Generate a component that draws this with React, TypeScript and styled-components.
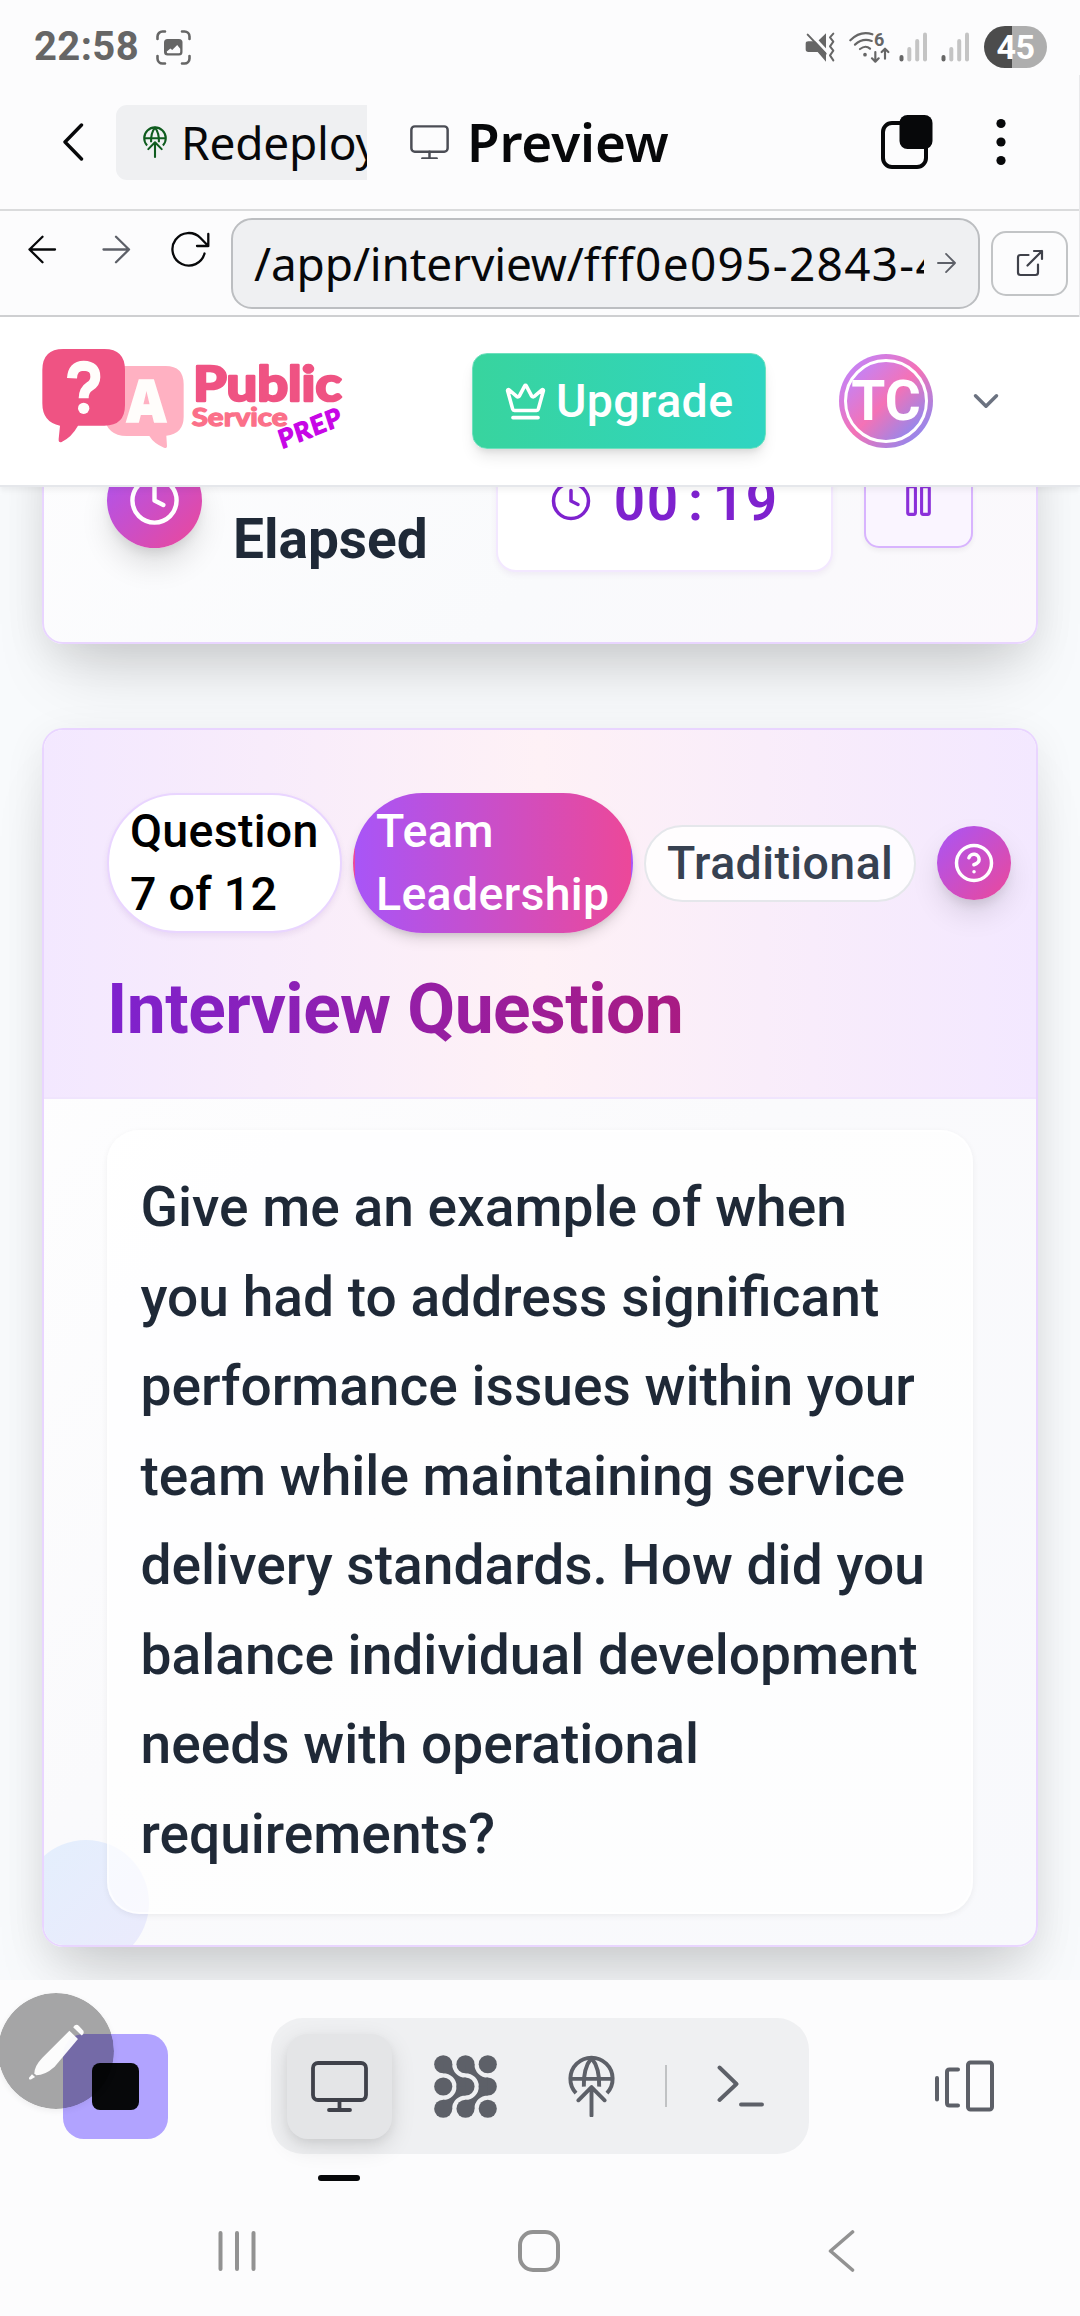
import React from "react";
import styled, { createGlobalStyle, css } from "styled-components";
import { ChevronDown, CircleHelp, Clock, Crown, Pause } from "lucide-react";

const Global = createGlobalStyle`
  * { box-sizing: border-box; }
  body { margin: 0; background: #fcfcfd; }
`;

const shellFont = `"Noto Sans", "Open Sans", sans-serif`;
const appFont = `Roboto, "Liberation Sans", sans-serif`;

const Phone = styled.div`
  position: relative;
  display: flex;
  flex-direction: column;
  width: 1080px;
  height: 2316px;
  overflow: hidden;
  background: #fcfcfd;
  font-family: ${appFont};
`;

/* ---------- system status bar ---------- */

const StatusBar = styled.div`
  display: flex;
  align-items: center;
  flex: none;
  height: 75px;
  padding: 19px 33px 0 34px;
  color: #666;
`;

const Time = styled.span`
  width: 122px;
  font-size: 40px;
  font-weight: 700;
  line-height: 44px;
  letter-spacing: 0.4px;
`;

const StatusIcons = styled.div`
  display: flex;
  align-items: center;
  margin-left: auto;
`;

const Battery = styled.span`
  display: flex;
  align-items: center;
  justify-content: center;
  width: 63px;
  height: 42px;
  margin-left: 15px;
  border-radius: 21px;
  background: linear-gradient(90deg, #4c4c4c 45%, #aeaeae 45%);
  color: #fff;
  font-size: 34px;
  font-weight: 700;
  line-height: 1;
  letter-spacing: -0.5px;
`;

const CaptureIcon = () => (
  <svg width="35" height="35" viewBox="0 0 35 35" fill="none" stroke="#666" strokeWidth="2.6" strokeLinecap="round">
    <path d="M1.5 9V6.5a5 5 0 0 1 5-5H9M26 1.5h2.500a5 5 0 0 1 5 5V9M33.500 26v2.500a5 5 0 0 1-5 5H26M9 33.500H6.500a5 5 0 0 1-5-5V26" />
    <rect x="8" y="9" width="18.500" height="16.500" rx="3.500" fill="#666" stroke="none" />
    <path d="M10.800 21.500l3.600-3 1.800 1.600 5-5 3 3.600V22q0 1.300-1.300 1.300H12q-1.200 0-1.200-1.300z" fill="#fcfcfd" stroke="none" />
  </svg>
);

const MuteIcon = () => (
  <svg width="30" height="31" viewBox="44 51 90 93">
    <path d="M62 79L82 79L107 55V140L82 111H54Q46 111 46 103V86Q46 79 54 79Z" fill="#666" />
    <path d="M60 56L112 112" stroke="#fcfcfd" strokeWidth="9" />
    <path d="M52 59L106 116" stroke="#666" strokeWidth="6" strokeLinecap="round" />
    <path d="M129 56l-10 11 10 13-10 14 10 13-10 14 10 15" fill="none" stroke="#666" strokeWidth="6" strokeLinecap="round" strokeLinejoin="round" />
  </svg>
);

const WifiSix = styled.span`
  position: relative;
  display: block;
  width: 41px;
  height: 32px;
  margin-left: 14px;
`;

const WifiDigit = styled.span`
  position: absolute;
  left: 25px;
  top: 0;
  font-size: 18px;
  font-weight: 700;
  line-height: 18px;
`;

const WifiIcon = () => (
  <WifiSix>
    <svg width="41" height="32" viewBox="177 50 123 96" fill="none" stroke="#666" strokeWidth="6.500" strokeLinecap="round" strokeLinejoin="round">
      <path d="M181 78Q211 48 247 60M195 91Q218 70 245 80M210 104Q227 91 240 103" />
      <circle cx="225" cy="121" r="5.500" fill="#666" stroke="none" />
      <path d="M256 113V141M246 132L256 142L266 132M285 133V104M275 113L285 103L295 113" />
    </svg>
    <WifiDigit>6</WifiDigit>
  </WifiSix>
);

const SignalSvg = styled.svg<{ $gap: number }>`
  margin-left: ${(p) => p.$gap}px;
`;

const SignalIcon = ({ gap }: { gap: number }) => (
  <SignalSvg $gap={gap} width="28" height="30" viewBox="0 0 28 30">
    <rect x="0.500" y="23" width="4" height="6.500" rx="2" fill="#666" />
    <rect x="8.300" y="15" width="4" height="14.500" rx="2" fill="#c4c4c4" />
    <rect x="16.200" y="7" width="4" height="22.500" rx="2" fill="#c4c4c4" />
    <rect x="24" y="0.500" width="4" height="29" rx="2" fill="#c4c4c4" />
  </SignalSvg>
);

/* ---------- browser shell ---------- */

const Shell = styled.div`
  flex: none;
  border-right: 1px solid #e9e9eb;
`;

const TitleBar = styled.div`
  display: flex;
  align-items: center;
  height: 136px;
  padding-left: 62px;
  border-bottom: 2px solid #dadbdc;
`;

const BackChevron = styled.svg`
  flex: none;
  margin-right: 32px;
`;

const RedeployChip = styled.div`
  display: flex;
  align-items: center;
  flex: none;
  width: 251px;
  height: 75px;
  padding-left: 27px;
  border-radius: 11px 0 0 11px;
  background: #eff0f2;
  overflow: hidden;
  font-family: ${shellFont};
  font-size: 46px;
  line-height: 75px;
  letter-spacing: -0.2px;
  color: #07080a;
  white-space: nowrap;

  svg { flex: none; margin-right: 14px; }
`;

const PreviewTitle = styled.h1`
  display: flex;
  align-items: center;
  gap: 18px;
  margin: 0 0 0 43px;
  font-family: ${shellFont};
  font-size: 53px;
  font-weight: 600;
  line-height: 70px;
  letter-spacing: -0.1px;
  color: #07080a;
`;

const TitleActions = styled.div`
  display: flex;
  align-items: center;
  gap: 63px;
  margin-left: auto;
  padding-right: 73px;
`;

const AddressBar = styled.div`
  display: flex;
  align-items: center;
  height: 106px;
  padding: 0 10px 0 27px;
  border-bottom: 2px solid #cfd0d2;
`;

const NavButtons = styled.div`
  display: flex;
  align-items: center;
  width: 204px;
  margin-bottom: 28px;
  gap: 40px;
`;

const AddressField = styled.div`
  display: flex;
  align-items: center;
  width: 749px;
  height: 91px;
  padding: 0 22px 0 21px;
  border: 2px solid #bcbec1;
  border-radius: 21px;
  background: #eff0f2;
`;

const Url = styled.span`
  flex: none;
  width: 670px;
  margin-right: 13px;
  overflow: hidden;
  font-family: ${shellFont};
  font-size: 46px;
  line-height: 64px;
  letter-spacing: -0.15px;
  color: #07080a;
  white-space: nowrap;
`;

const UrlId = styled.span`
  letter-spacing: 1.3px;
`;

const OpenButton = styled.div`
  display: flex;
  align-items: center;
  justify-content: center;
  width: 77px;
  height: 65px;
  margin-left: 11px;
  border: 2px solid #c2c4c6;
  border-radius: 15px;
`;

const GlobeUpIcon = ({ width, color, stroke = 11.5 }: { width: number; color: string; stroke?: number }) => (
  <svg width={width} height={(width * 184) / 138} viewBox="80.500 803 138 184" fill="none" stroke={color} strokeWidth={stroke} strokeLinecap="round" strokeLinejoin="round">
    <path d="M104 915A62 62 0 1 1 195 915" strokeLinecap="butt" />
    <path d="M88 873H211" strokeLinecap="butt" />
    <path d="M127 896Q125 842 149.500 812Q174 842 172 896" strokeLinecap="butt" />
    <path d="M149.500 900V981M111 936L149.500 897L188 936" />
  </svg>
);

const MonitorIcon = ({ width, color, stroke }: { width: number; color: string; stroke: number }) => (
  <svg width={width} height={(width * 51) / 57} viewBox="0 0 57 51" fill="none" stroke={color} strokeWidth={stroke} strokeLinecap="round">
    <rect x="2" y="2" width="53" height="37" rx="5" />
    <path d="M28.500 39V49M18 49H39" />
  </svg>
);

/* ---------- application header ---------- */

const AppHeader = styled.header`
  position: relative;
  z-index: 2;
  display: flex;
  align-items: center;
  flex: none;
  height: 170px;
  padding: 0 82px 0 35px;
  border-bottom: 2px solid #e5e7eb;
  background: #fff;
  box-shadow: 0 3px 6px rgba(0, 0, 0, 0.06);
`;

const LogoMark = styled.svg`
  flex: none;
  margin-bottom: 7px;
`;

const Upgrade = styled.button`
  display: flex;
  align-items: center;
  gap: 9px;
  width: 294px;
  height: 96px;
  margin-left: 117px;
  padding: 0 0 0 31px;
  border: 1px solid #6ee0bd;
  border-radius: 15px;
  background: linear-gradient(90deg, #38d49e, #2fd5c2);
  box-shadow: 0 10px 15px -3px rgba(0, 0, 0, 0.1), 0 4px 6px -2px rgba(0, 0, 0, 0.08);
  color: #fff;
  font-family: ${appFont};
  font-size: 46.500px;
  font-weight: 500;
  line-height: 1;
  letter-spacing: 0.4px;
`;

const avatarGradient = "linear-gradient(135deg, #c084fc 8%, #f472b6 50%, #818cf8 95%)";

const Avatar = styled.div`
  width: 94px;
  height: 94px;
  margin-left: 73px;
  padding: 5px;
  border-radius: 50%;
  background: ${avatarGradient};
`;

const AvatarInner = styled.div`
  display: flex;
  align-items: center;
  justify-content: center;
  height: 84px;
  border: 3px solid #fff;
  border-radius: 50%;
  background: ${avatarGradient};
  color: #fff;
  font-size: 55px;
  font-weight: 700;
  line-height: 1;
`;

const Caret = styled(ChevronDown)`
  margin-left: auto;
  margin-right: -9px;
`;

const Logo = () => (
  <LogoMark width="320" height="125" viewBox="0 0 960 375" fontFamily={`Lato, "Open Sans", sans-serif`}>
    <path d="M262 93H392Q446 93 446 148V245Q446 296 394 302L396 334Q396 342 387 338Q357 326 343 303H275Q215 303 205 240V150Q205 93 262 93Z" fill="#ffb1c2" />
    <path d="M85 42H208Q270 42 270 105V210Q270 272 208 272H129Q110 306 80 321Q70 324 71 312L75 272Q22 262 22 205V105Q22 42 85 42Z" fill="#ef5383" />
    <g fill="none" stroke="#fffdfb" strokeWidth="30" strokeLinejoin="round">
      <path d="M111 130Q113 92 146 92Q182 93 181 126Q181 145 163 155Q146 166 146 190" />
    </g>
    <circle cx="146" cy="220" r="17" fill="#fffdfb" />
    <text x="275" y="260" fontSize="176" fontWeight="800" fill="#fffdfb" stroke="#fffdfb" strokeWidth="5" textLength="118" lengthAdjust="spacingAndGlyphs" fontFamily={`"Open Sans", sans-serif`}>A</text>
    <text x="474" y="197" fontSize="142" fontWeight="700" fill="#ef5383" stroke="#ef5383" strokeWidth="8" strokeLinejoin="round" textLength="446" lengthAdjust="spacingAndGlyphs">Public</text>
    <text x="470" y="273" fontSize="72" fontWeight="700" fill="#fb7089" stroke="#fb7089" strokeWidth="4" strokeLinejoin="round" textLength="288" lengthAdjust="spacingAndGlyphs">Service</text>
    <text transform="translate(741 342) rotate(-22) skewX(-4)" fontSize="76" fontWeight="700" fill="#c706e6" stroke="#c706e6" strokeWidth="4" strokeLinejoin="round" textLength="198" lengthAdjust="spacing">PREP</text>
  </LogoMark>
);

/* ---------- page content ---------- */

const Page = styled.main`
  display: flex;
  flex-direction: column;
  gap: 84px;
  flex: none;
  height: 1493px;
  padding: 0 42px;
  overflow: hidden;
  background: #f8fafc;
`;

const cardShadow = css`
  box-shadow: 0 44px 66px -20px rgba(0, 0, 0, 0.15), 0 10px 40px rgba(0, 0, 0, 0.08);
`;

const TimerCard = styled.section`
  display: flex;
  flex: none;
  height: 257px;
  margin-top: -100px;
  padding: 0 62px 0 63px;
  border: 2px solid #e9d5ff;
  border-radius: 21px;
  background: linear-gradient(135deg, #fdfdfe 0%, #f9fafc 55%, #fbf8fc 100%);
  ${cardShadow}
`;

const GradientDisc = styled.div<{ $size: number }>`
  display: flex;
  align-items: center;
  justify-content: center;
  flex: none;
  width: ${(p) => p.$size}px;
  height: ${(p) => p.$size}px;
  border-radius: 50%;
  background: linear-gradient(135deg, #a855f7, #ec4899);
  box-shadow: 0 ${(p) => p.$size / 5}px 30px -2px rgba(0, 0, 0, 0.12), 0 8px 12px -4px rgba(0, 0, 0, 0.1);
`;

const TimerDisc = styled(GradientDisc)`
  margin-top: 64px;
`;

const TimerLabel = styled.h2`
  width: 258px;
  margin: 116px 0 0 31px;
  color: #1f2937;
  font-size: 55px;
  font-weight: 700;
  line-height: 69px;
`;

const TimerBox = styled.div`
  display: flex;
  align-items: center;
  width: 337px;
  height: 143px;
  margin: 40px 0 0 5px;
  padding-left: 52px;
  border: 2px solid #f3e8ff;
  border-radius: 20px;
  background: #fff;
  box-shadow: 0 3px 6px rgba(80, 0, 120, 0.06);
`;

const Digits = styled.div`
  display: flex;
  margin-left: 21px;
  color: #7e22ce;
  font-size: 55px;
  font-weight: 600;
  line-height: 54px;

  span { width: 33px; text-align: center; }
`;

const PauseButton = styled.div`
  display: flex;
  align-items: center;
  justify-content: center;
  width: 109px;
  height: 95px;
  margin: 64px 0 0 31px;
  border: 2px solid #d8b4fe;
  border-radius: 15px;
  background: #faf5ff;
  box-shadow: 0 3px 5px rgba(0, 0, 0, 0.05);
`;

const QuestionShadow = styled.div`
  flex: none;
  border-radius: 21px;
  ${cardShadow}
`;

const QuestionCard = styled.section`
  position: relative;
  height: 1219px;
  border: 2px solid #e9d5ff;
  border-radius: 21px;
  overflow: hidden;
  background: linear-gradient(135deg, #fff 0%, #fafafc 50%, #f8f9fc 100%);
`;

const QuestionHeader = styled.div`
  height: 369px;
  padding: 63px 0 0 63px;
  border-bottom: 2px solid #f0e5fd;
  background: linear-gradient(90deg, #f3e8ff, #fef1f6 50%, #f3e8ff);
`;

const Pills = styled.div`
  display: flex;
  align-items: center;
`;

const Pill = styled.div<{ $tone: "plain" | "brand" | "soft" }>`
  flex: none;
  padding: 5px 21px;
  border: 2px solid transparent;
  border-radius: 71px;
  font-size: 46.500px;
  font-weight: 500;
  line-height: 63px;
  letter-spacing: 0.3px;
  white-space: pre;
  ${(p) =>
    p.$tone === "plain" &&
    css`
      width: 235px;
      margin-right: 11px;
      border-color: #e9d5ff;
      background: #fff;
      color: #000;
      box-shadow: 0 3px 6px rgba(80, 0, 120, 0.08);
    `}
  ${(p) =>
    p.$tone === "brand" &&
    css`
      width: 280px;
      margin-right: 11px;
      background: linear-gradient(90deg, #a855f7, #ec4899);
      color: #fff;
      box-shadow: 0 8px 14px -2px rgba(0, 0, 0, 0.13), 0 4px 6px -2px rgba(0, 0, 0, 0.1);
    `}
  ${(p) =>
    p.$tone === "soft" &&
    css`
      width: 272px;
      margin-right: 21px;
      border-color: #e5e7eb;
      background: rgba(255, 255, 255, 0.85);
      color: #374151;
      letter-spacing: 0.4px;
    `}
`;

const HeaderTitle = styled.h2`
  width: 866px;
  margin: 33px 0 0;
  background: linear-gradient(90deg, #7e22ce, #be185d);
  background-clip: text;
  -webkit-background-clip: text;
  color: transparent;
  font-size: 69.500px;
  font-weight: 700;
  line-height: 88px;
  letter-spacing: -0.550px;
`;

const CornerGlow = styled.div`
  position: absolute;
  left: -21px;
  bottom: -21px;
  width: 126px;
  height: 126px;
  border-radius: 50%;
  background: linear-gradient(135deg, #e3effd, #ebeafc);
`;

const QuestionText = styled.p`
  position: relative;
  height: 784px;
  margin: 31px 63px 0;
  padding: 31px 29px 31px 31.500px;
  border: 2px solid rgba(255, 255, 255, 0.6);
  border-radius: 32px;
  background: rgba(255, 255, 255, 0.7);
  box-shadow: 0 2px 6px rgba(0, 0, 0, 0.06);
  color: #1f2937;
  font-size: 55.125px;
  font-weight: 500;
  line-height: 89.580px;
`;

/* ---------- bottom toolbar ---------- */

const Toolbar = styled.nav`
  display: flex;
  flex: none;
  height: 210px;
  padding: 38px 86px 0 63px;
  background: #fcfcfd;
`;

const StopButton = styled.div`
  display: flex;
  align-items: center;
  justify-content: center;
  width: 105px;
  height: 105px;
  margin-top: 16px;
  border-radius: 21px;
  background: #b1a3ff;
`;

const StopGlyph = styled.span`
  width: 47px;
  height: 47px;
  border-radius: 8px;
  background: #07080a;
`;

const TabGroup = styled.div`
  display: flex;
  align-items: center;
  width: 538px;
  height: 136px;
  margin-left: 103px;
  padding-left: 16px;
  border-radius: 32px;
  background: #eff0f2;
`;

const Tab = styled.div<{ $active?: boolean }>`
  position: relative;
  display: flex;
  align-items: center;
  justify-content: center;
  flex: none;
  width: 105px;
  height: 105px;
  margin-right: 21px;
  border-radius: 21px;
  ${(p) =>
    p.$active &&
    css`
      background: #e4e5e7;
      box-shadow: 0 8px 24px rgba(0, 0, 0, 0.12), 0 4px 8px rgba(0, 0, 0, 0.05);
    `}
`;

const ActiveMark = styled.span`
  position: absolute;
  left: 31px;
  bottom: -42px;
  width: 42px;
  height: 6px;
  border-radius: 3px;
  background: #07080a;
`;

const TabDivider = styled.span`
  flex: none;
  width: 2px;
  height: 42px;
  margin-right: 21px;
  background: #c0c2c4;
`;

const PanelToggle = styled.svg`
  margin: 42px 0 0 auto;
`;

const neck = (x: number, y: number) =>
  `M${x + 26} ${y}A39 39 0 0 0 ${x + 65} ${y + 39}V${y + 65}H${x + 39}A39 39 0 0 0 ${x} ${y + 26}V${y}Z`;
const neckUp = (x: number, y: number) =>
  `M${x + 26} ${y}A39 39 0 0 1 ${x + 65} ${y - 39}V${y - 65}H${x + 39}A39 39 0 0 1 ${x} ${y - 26}V${y}Z`;

const GridIcon = () => (
  <svg width="63" height="63" viewBox="0 0 184 184" fill="#5d6068">
    {[27, 92, 157].map((y) => [27, 92, 157].map((x) => <circle key={`${x}-${y}`} cx={x} cy={y} r="26.500" />))}
    {[neck(27, 27), neck(92, 27), neckUp(27, 157), neckUp(92, 157)].map((d) => (
      <path key={d} d={d} />
    ))}
  </svg>
);

const PenBubble = styled.svg`
  position: absolute;
  left: -2px;
  top: 1993px;
  border-radius: 50%;
  box-shadow: 0 2px 6px rgba(0, 0, 0, 0.06);
`;

const SystemNav = styled.div`
  display: flex;
  flex: none;
  align-items: flex-start;
  padding: 40px 0 0 218px;
`;

const NavKey = styled.svg<{ $before?: number }>`
  flex: none;
  margin-left: ${(p) => p.$before ?? 0}px;
`;

export default function App() {
  return (
    <Phone>
      <Global />
      <StatusBar>
        <Time>22:58</Time>
        <CaptureIcon />
        <StatusIcons>
          <MuteIcon />
          <WifiIcon />
          <SignalIcon gap={9} />
          <SignalIcon gap={14} />
          <Battery>45</Battery>
        </StatusIcons>
      </StatusBar>

      <Shell>
        <TitleBar>
          <BackChevron width="22" height="38" viewBox="0 0 22 38" fill="none" stroke="#07080a" strokeWidth="3.400" strokeLinecap="round" strokeLinejoin="round">
            <path d="M19.500 2L3 19L19.500 36" />
          </BackChevron>
          <RedeployChip>
            <GlobeUpIcon width={24} color="#0f5c1f" stroke={12} />
            Redeploy
          </RedeployChip>
          <PreviewTitle>
            <MonitorIcon width={39} color="#4b4d55" stroke={3.6} />
            Preview
          </PreviewTitle>
          <TitleActions>
            <svg width="52" height="54" viewBox="0 0 52 54">
              <rect x="2" y="8" width="43" height="44" rx="9" fill="none" stroke="#07080a" strokeWidth="4" />
              <rect x="18.500" y="0" width="33" height="34" rx="8" fill="#07080a" />
            </svg>
            <svg width="10" height="48" viewBox="0 0 10 48" fill="#07080a">
              <circle cx="5" cy="5.500" r="4.600" />
              <circle cx="5" cy="24" r="4.600" />
              <circle cx="5" cy="42.500" r="4.600" />
            </svg>
          </TitleActions>
        </TitleBar>
        <AddressBar>
          <NavButtons>
            <svg width="35" height="29" viewBox="0 0 35 29" fill="none" stroke="#07080a" strokeWidth="2.300" strokeLinecap="round" strokeLinejoin="round">
              <path d="M28 14.500H2.500M15.500 1.800L2.500 14.500L15.500 27.200" />
            </svg>
            <svg width="29" height="29" viewBox="0 0 29 29" fill="none" stroke="#5d6068" strokeWidth="2.300" strokeLinecap="round" strokeLinejoin="round">
              <path d="M1.500 14.500H27M14 1.800L27 14.500L14 27.200" />
            </svg>
            <svg width="40" height="36" viewBox="0 0 40 36" fill="none" stroke="#07080a" strokeWidth="2.300" strokeLinecap="round" strokeLinejoin="round">
              <path d="M33.500 22.500A16.300 16.300 0 1 1 29.500 7L37.300 15M37.300 3V15H26" />
            </svg>
          </NavButtons>
          <AddressField>
            <Url>
              /app/interview/<UrlId>fff0e095-2843-4</UrlId>
            </Url>
            <svg width="20" height="22" viewBox="0 0 20 22" fill="none" stroke="#5d6068" strokeWidth="1.900" strokeLinecap="round" strokeLinejoin="round">
              <path d="M1 11H19M9.500 1.500L19 11L9.500 20.500" />
            </svg>
          </AddressField>
          <OpenButton>
            <svg width="28" height="28" viewBox="0 0 28 28" fill="none" stroke="#3f414a" strokeWidth="2.200" strokeLinecap="round" strokeLinejoin="round">
              <path d="M12.500 6H4.500Q2 6 2 8.500V23.500Q2 26 4.500 26H19.500Q22 26 22 23.500V15.500M18 2H26V10M26 2L11.500 16.500" />
            </svg>
          </OpenButton>
        </AddressBar>
      </Shell>

      <AppHeader>
        <Logo />
        <Upgrade>
          <Crown size={43} strokeWidth={2} />
          Upgrade
        </Upgrade>
        <Avatar>
          <AvatarInner>TC</AvatarInner>
        </Avatar>
        <Caret size={42} color="#6b7280" strokeWidth={2} />
      </AppHeader>

      <Page>
        <TimerCard>
          <TimerDisc $size={95}>
            <Clock size={53} color="#fff" strokeWidth={2} />
          </TimerDisc>
          <TimerLabel>Elapsed</TimerLabel>
          <TimerBox>
            <Clock size={42} color="#7e22ce" strokeWidth={2} />
            <Digits>
              {"00:19".split("").map((c, i) => (
                <span key={i}>{c}</span>
              ))}
            </Digits>
          </TimerBox>
          <PauseButton>
            <Pause size={37} color="#8b30d9" strokeWidth={2} />
          </PauseButton>
        </TimerCard>

        <QuestionShadow>
          <QuestionCard>
            <QuestionHeader>
              <Pills>
                <Pill $tone="plain">{"Question\n7 of 12"}</Pill>
                <Pill $tone="brand">{"Team\nLeadership"}</Pill>
                <Pill $tone="soft">Traditional</Pill>
                <GradientDisc $size={74}>
                  <CircleHelp size={42} color="#fff" strokeWidth={2} />
                </GradientDisc>
              </Pills>
              <HeaderTitle>Interview Question</HeaderTitle>
            </QuestionHeader>
            <CornerGlow />
            <QuestionText>
              Give me an example of when you had to address significant performance issues within your team while
              maintaining service delivery standards. How did you balance individual development needs with operational
              requirements?
            </QuestionText>
          </QuestionCard>
        </QuestionShadow>
      </Page>

      <Toolbar>
        <StopButton>
          <StopGlyph />
        </StopButton>
        <TabGroup>
          <Tab $active>
            <MonitorIcon width={57} color="#3f414a" stroke={3.8} />
            <ActiveMark />
          </Tab>
          <Tab>
            <GridIcon />
          </Tab>
          <Tab>
            <GlobeUpIcon width={47} color="#5d6068" />
          </Tab>
          <TabDivider />
          <Tab>
            <svg width="48" height="43" viewBox="0 0 48 43" fill="none" stroke="#5d6068" strokeWidth="3.900" strokeLinecap="round" strokeLinejoin="round">
              <path d="M2.500 2.500L19.500 19L2.500 35M24 39.500H45" />
            </svg>
          </Tab>
        </TabGroup>
        <PanelToggle width="60" height="52" viewBox="0 0 60 52" fill="none" stroke="#5d6068" strokeWidth="4" strokeLinecap="round" strokeLinejoin="round">
          <path d="M3 18V39.500M24 9.500H15.500Q13 9.500 13 12V43Q13 45.500 15.500 45.500H24" />
          <rect x="34" y="2.500" width="24" height="47" rx="2.500" />
        </PanelToggle>
      </Toolbar>

      <SystemNav>
        <NavKey width="38" height="42" viewBox="0 0 38 42" stroke="#929292" strokeWidth="4" strokeLinecap="round">
          <path d="M2.500 3V39M19 3V39M35.500 3V39" />
        </NavKey>
        <NavKey $before={262} width="42" height="42" viewBox="0 0 42 42" fill="none" stroke="#929292" strokeWidth="4">
          <rect x="2" y="2" width="38" height="38" rx="13" />
        </NavKey>
        <NavKey $before={268} width="27" height="42" viewBox="0 0 27 42" fill="none" stroke="#929292" strokeWidth="3.600" strokeLinecap="round" strokeLinejoin="round">
          <path d="M24.500 2L2.500 21L24.500 40" />
        </NavKey>
      </SystemNav>

      <PenBubble width="116" height="116" viewBox="-5 623 338 338">
        <circle cx="164" cy="792" r="169" fill="#000" fillOpacity="0.345" />
        <g fill="#fff" fillOpacity="0.96">
          <path d="M203 733L228 757L160 838Q132 863 106 863L101 857Q101 836 125 811Z" />
          <path d="M214 723Q222 711 231 719L243 732Q248 740 239 747Z" />
          <path d="M94 860L103 868L91 875Q83 876 86 869Z" />
        </g>
      </PenBubble>
    </Phone>
  );
}
